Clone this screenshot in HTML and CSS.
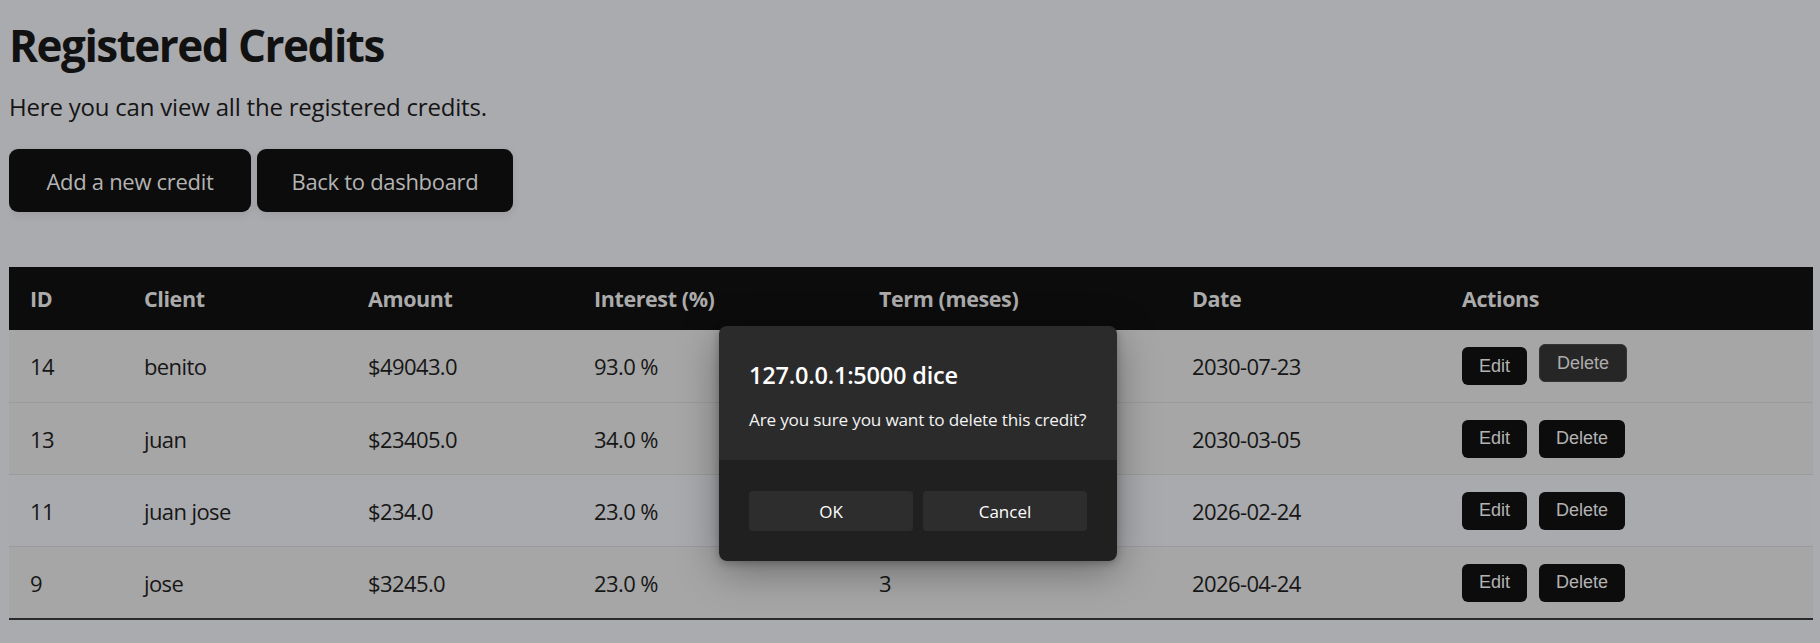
FILE: index.html
```html
<!DOCTYPE html>
<html lang="en">
<head>
<meta charset="utf-8">
<title>Registered Credits</title>
<link rel="stylesheet" href="styles.css">
</head>
<body>
<main class="page">
  <h1 class="title">Registered Credits</h1>
  <p class="lead">Here you can view all the registered credits.</p>
  <div class="toolbar">
    <a class="btn-main btn-add" href="#">Add a new credit</a>
    <a class="btn-main btn-back" href="#">Back to dashboard</a>
  </div>
  <table class="credits">
    <colgroup>
      <col class="c-id"><col class="c-client"><col class="c-amount"><col class="c-interest"><col class="c-term"><col class="c-date"><col class="c-actions">
    </colgroup>
    <thead>
      <tr><th>ID</th><th>Client</th><th>Amount</th><th>Interest (%)</th><th>Term (meses)</th><th>Date</th><th>Actions</th></tr>
    </thead>
    <tbody>
      <tr class="row-gray">
        <td>14</td><td>benito</td><td>$49043.0</td><td>93.0 %</td><td></td><td>2030-07-23</td>
        <td><button class="btn-sm">Edit</button><button class="btn-sm is-hover">Delete</button></td>
      </tr>
      <tr class="row-gray">
        <td>13</td><td>juan</td><td>$23405.0</td><td>34.0 %</td><td></td><td>2030-03-05</td>
        <td><button class="btn-sm">Edit</button><button class="btn-sm">Delete</button></td>
      </tr>
      <tr class="row-light">
        <td>11</td><td>juan jose</td><td>$234.0</td><td>23.0 %</td><td></td><td>2026-02-24</td>
        <td><button class="btn-sm">Edit</button><button class="btn-sm">Delete</button></td>
      </tr>
      <tr class="row-gray">
        <td>9</td><td>jose</td><td>$3245.0</td><td>23.0 %</td><td>3</td><td>2026-04-24</td>
        <td><button class="btn-sm">Edit</button><button class="btn-sm">Delete</button></td>
      </tr>
    </tbody>
  </table>
</main>

<div class="dialog" role="alertdialog">
  <div class="dialog-body">
    <div class="dialog-title">127.0.0.1:5000 dice</div>
    <div class="dialog-msg">Are you sure you want to delete this credit?</div>
  </div>
  <div class="dialog-foot">
    <button class="dlg-btn">OK</button>
    <button class="dlg-btn">Cancel</button>
  </div>
</div>
</body>
</html>
```

FILE: styles.css
```css
html, body {
  height: 100%;
}
body {
  margin: 0 7px 0 9px;
  background: #aaabaf;
  font-family: "Open Sans", "Noto Sans", sans-serif;
  color: #141414;
  overflow: hidden;
}
.page {
  display: flex;
  flex-direction: column;
  align-items: flex-start;
}
.title {
  margin: 17px 0 0;
  font-size: 44px;
  line-height: 56px;
  font-weight: 700;
  letter-spacing: -1.5px;
  color: #111;
}
.lead {
  margin: 18px 0 0;
  font-size: 24px;
  line-height: 32px;
  letter-spacing: -0.2px;
  color: #151515;
}
.toolbar {
  margin-top: 26px;
  display: flex;
  gap: 6px;
}
.btn-main {
  display: flex;
  align-items: center;
  justify-content: center;
  height: 63px;
  box-sizing: border-box;
  background: #0c0c0c;
  color: #b4b4b4;
  text-decoration: none;
  white-space: nowrap;
  border-radius: 9px;
  font-size: 22px;
  letter-spacing: -0.3px;
  box-shadow: 0 3px 10px rgba(0, 0, 0, 0.08);
}
.btn-add { width: 242px; }
.btn-back { width: 256px; }
.credits {
  margin-top: 55px;
  width: 100%;
  border-collapse: collapse;
  table-layout: fixed;
  border-bottom: 2px solid #2a2a2a;
}
.c-id { width: 114px; }
.c-client { width: 224px; }
.c-amount { width: 226px; }
.c-interest { width: 285px; }
.c-term { width: 313px; }
.c-date { width: 270px; }
.credits th {
  background: #0c0c0c;
  color: #ababab;
  text-align: left;
  font-weight: 700;
  font-size: 21.5px;
  letter-spacing: -0.4px;
  height: 63px;
  padding: 0 20px 0 21px;
}
.credits td {
  height: 71px;
  padding: 0 20px 0 21px;
  font-size: 22px;
  letter-spacing: -0.6px;
  color: #161616;
  border-top: 1px solid #9b9b9b;
}
.credits tbody tr:first-child td {
  border-top: none;
  height: 72px;
}
.row-gray td { background: #a6a6a6; }
.row-light td { background: #a9aaae; }
.btn-sm {
  font-family: "Liberation Sans", Arial, sans-serif;
  font-size: 18px;
  height: 38px;
  padding: 0 17px;
  margin-right: 12px;
  border: none;
  border-radius: 6px;
  background: #0c0c0c;
  color: #b3b3b3;
  vertical-align: middle;
}
.btn-sm.is-hover {
  background: #262626;
  color: #adadad;
  border: 1px solid #343434;
  position: relative;
  top: -3px;
}
.dialog {
  position: absolute;
  left: 719px;
  top: 326px;
  width: 398px;
  height: 235px;
  border-radius: 8px;
  overflow: hidden;
  display: flex;
  flex-direction: column;
  box-shadow: 0 10px 40px rgba(0, 0, 0, 0.35), 0 2px 8px rgba(0, 0, 0, 0.25);
  font-family: "Open Sans", "Noto Sans", sans-serif;
}
.dialog-body {
  background: #2b2b2b;
  height: 134px;
  padding: 0 30px;
  box-sizing: border-box;
}
.dialog-title {
  color: #fff;
  font-size: 23.5px;
  font-weight: 600;
  letter-spacing: -0.2px;
  line-height: 30px;
  margin-top: 34px;
}
.dialog-msg {
  color: #f2f2f2;
  font-size: 17.2px;
  letter-spacing: -0.2px;
  line-height: 24px;
  margin-top: 18px;
}
.dialog-foot {
  flex: 1;
  background: #202020;
  display: flex;
  gap: 10px;
  padding: 31px 30px 0;
}
.dlg-btn {
  width: 164px;
  height: 40px;
  border: none;
  border-radius: 4px;
  background: #2d2d2d;
  color: #fff;
  font-family: "Open Sans", "Noto Sans", sans-serif;
  font-size: 17px;
}
```
